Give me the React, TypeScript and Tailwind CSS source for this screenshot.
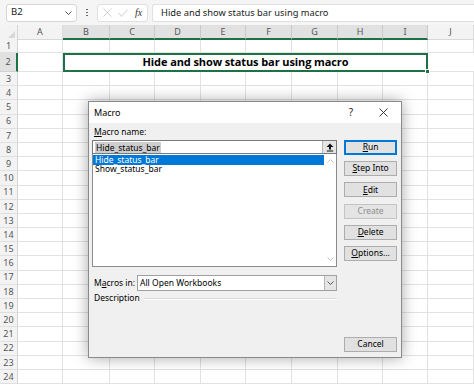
import clsx from "clsx";

const cols = [
  { k: "A", w: 45 },
  { k: "B", w: 47 },
  { k: "C", w: 45 },
  { k: "D", w: 46 },
  { k: "E", w: 45 },
  { k: "F", w: 46 },
  { k: "G", w: 46 },
  { k: "H", w: 45 },
  { k: "I", w: 45 },
  { k: "J", w: 46 },
];

const isSel = (k: string) => k !== "A" && k !== "J";

const rowHeights = [13, 19, ...Array.from({ length: 22 }, () => 14.2)];

const Btn = ({
  children,
  primary,
  disabled,
}: {
  children: React.ReactNode;
  primary?: boolean;
  disabled?: boolean;
}) => (
  <div
    className={clsx(
      "h-[15px] flex items-center justify-center border text-[8.5px] leading-none",
      primary && "border-[#0078d7] bg-[#e1e1e1] shadow-[inset_0_0_0_1px_#0078d7] text-black",
      !primary && !disabled && "border-[#adadad] bg-[#e1e1e1] text-black",
      disabled && "border-[#c4c4c4] bg-[#e4e4e4] text-[#8d8d8d]"
    )}
  >
    {children}
  </div>
);

const MacroDialog = () => (
  <div className="absolute left-[88px] top-[101px] w-[314px] h-[257px] bg-[#f0f0f0] border border-[#8a8a8a] shadow-[0_0_14px_rgba(0,0,0,0.35)] flex flex-col font-['Noto_Sans',sans-serif] text-black">
    <div className="h-[21px] bg-white flex items-center pl-[5px] shrink-0">
      <span className="text-[9px]">Macro</span>
      <span className="ml-auto text-[10px] mr-[26px] text-[#222]">?</span>
      <svg width="9" height="9" viewBox="0 0 9 9" className="mr-[13px]">
        <path d="M0.5 0.5 L8.5 8.5 M8.5 0.5 L0.5 8.5" stroke="#222" strokeWidth="0.9" />
      </svg>
    </div>
    <div className="flex-1 flex pl-[3px] pr-[4px] pb-[5px]">
      <div className="w-[246px] flex flex-col">
        <div className="h-[17px] flex items-center pl-[2px] pt-[1px] text-[8.5px]">
          <span>
            <span className="underline">M</span>acro name:
          </span>
        </div>
        <div className="h-[14px] bg-white border border-[#7a7a7a] flex items-center pl-[2px]">
          <span className="bg-[#cdcdcd] text-[8.5px] leading-[11px] px-[1px]">Hide_status_bar</span>
          <div className="ml-auto w-[14px] h-full bg-[#e5e5e5] border-l border-[#b5b5b5] flex items-center justify-center">
            <svg width="8" height="9" viewBox="0 0 8 9">
              <path d="M4 0.5 L7.5 4 L5 4 L5 6.5 L3 6.5 L3 4 L0.5 4 Z" fill="#111" />
              <path d="M0.8 8 H7.2" stroke="#111" strokeWidth="1" />
            </svg>
          </div>
        </div>
        <div className="h-[113px] bg-white border border-t-0 border-[#8c8c8c] flex">
          <div className="flex-1 flex flex-col text-[8.5px] pt-[1px]">
            <div className="h-[9.5px] bg-[#0078d7] text-white flex items-center pl-[2px] leading-none">
              Hide_status_bar
            </div>
            <div className="h-[10px] flex items-center pl-[2px] leading-none">Show_status_bar</div>
          </div>
          <div className="w-[12px] flex flex-col items-center justify-between py-[5px]">
            <svg width="7" height="4" viewBox="0 0 7 4">
              <path d="M0.5 3.5 L3.5 0.5 L6.5 3.5" stroke="#c2c2c2" fill="none" strokeWidth="1" />
            </svg>
            <svg width="7" height="4" viewBox="0 0 7 4">
              <path d="M0.5 0.5 L3.5 3.5 L6.5 0.5" stroke="#c2c2c2" fill="none" strokeWidth="1" />
            </svg>
          </div>
        </div>
        <div className="mt-[8px] h-[16px] flex items-center">
          <span className="w-[45px] pl-[2px] text-[8.5px]">
            M<span className="underline">a</span>cros in:
          </span>
          <div className="flex-1 h-full bg-white border border-[#a0a0a0] flex items-center pl-[2px]">
            <span className="text-[8.5px]">All Open Workbooks</span>
            <div className="ml-auto w-[12px] h-full bg-[#e5e5e5] border-l border-[#b5b5b5] flex items-center justify-center">
              <svg width="7" height="4" viewBox="0 0 7 4">
                <path d="M0.5 0.5 L3.5 3.5 L6.5 0.5" stroke="#444" fill="none" strokeWidth="0.9" />
              </svg>
            </div>
          </div>
        </div>
        <div className="mt-[1px] h-[13px] flex items-center">
          <span className="pl-[2px] text-[8.5px]">Description</span>
          <div className="flex-1 ml-[4px] h-[2px] border-t border-[#dadada] border-b border-b-white" />
        </div>
      </div>
      <div className="ml-[7px] w-[53px] pt-[17px] flex flex-col gap-[6.2px]">
        <Btn primary>
          <span className="underline">R</span>un
        </Btn>
        <Btn>
          <span className="underline">S</span>tep Into
        </Btn>
        <Btn>
          <span className="underline">E</span>dit
        </Btn>
        <Btn disabled>Create</Btn>
        <Btn>
          <span className="underline">D</span>elete
        </Btn>
        <Btn>
          <span className="underline">O</span>ptions...
        </Btn>
        <div className="mt-auto">
          <Btn>Cancel</Btn>
        </div>
      </div>
    </div>
  </div>
);

export default function App() {
  return (
    <div className="relative w-[474px] h-[385px] overflow-hidden bg-white font-['Noto_Sans',sans-serif]">
      {/* formula bar */}
      <div className="h-[25px] bg-[#f5f5f5] flex items-center px-[6px] gap-[4px]">
        <div className="w-[71px] h-[18px] bg-white border border-[#d6d6d6] rounded-[3px] flex items-center pl-[4px] pr-[4px]">
          <span className="text-[9.5px] text-[#222]">B2</span>
          <svg width="7" height="4" viewBox="0 0 7 4" className="ml-auto">
            <path d="M0.5 0.5 L3.5 3.5 L6.5 0.5" stroke="#555" fill="none" strokeWidth="1" />
          </svg>
        </div>
        <div className="w-[12px] flex flex-col items-center gap-[1.5px]">
          <div className="w-[1.5px] h-[1.5px] bg-[#555] rounded-full" />
          <div className="w-[1.5px] h-[1.5px] bg-[#555] rounded-full" />
          <div className="w-[1.5px] h-[1.5px] bg-[#555] rounded-full" />
        </div>
        <div className="w-[51px] h-[18px] bg-white border border-[#e0e0e0] rounded-[3px] flex items-center pl-[5px] gap-[6px]">
          <svg width="9" height="9" viewBox="0 0 9 9">
            <path d="M0.5 0.5 L8.5 8.5 M8.5 0.5 L0.5 8.5" stroke="#c9c9c9" strokeWidth="0.9" />
          </svg>
          <svg width="10" height="8" viewBox="0 0 10 8">
            <path d="M0.5 4 L3.5 7.5 L9.5 0.5" stroke="#c9c9c9" fill="none" strokeWidth="0.9" />
          </svg>
          <span className="text-[10px] italic font-['Liberation_Serif',serif] text-[#333] ml-[1px]">fx</span>
        </div>
        <div className="flex-1 h-[18px] bg-white border border-[#e0e0e0] rounded-l-[3px] border-r-0 -mr-[6px] flex items-center pl-[8px]">
          <span className="text-[9.3px] text-[#222]">Hide and show status bar using macro</span>
        </div>
      </div>

      {/* column header */}
      <div className="h-[15px] flex bg-[#f3f3f3] text-[9px] text-[#555]">
        <div className="w-[18px] border-r border-[#d4d4d4] relative">
          <div className="absolute right-[2px] bottom-[2px] w-0 h-0 border-l-[7px] border-l-transparent border-b-[7px] border-b-[#d8d8d8]" />
        </div>
        {cols.map((c) => (
          <div
            key={c.k}
            style={{ width: c.w }}
            className={clsx(
              "flex items-center justify-center border-r",
              isSel(c.k)
                ? "bg-[#e1e1e1] border-[#c8c8c8] border-b-2 border-b-[#1e7145]"
                : "border-[#dcdcdc] border-b border-b-[#d8d8d8]"
            )}
          >
            {c.k}
          </div>
        ))}
      </div>

      {/* rows */}
      {rowHeights.map((h, i) => {
        const n = i + 1;
        return (
          <div key={n} style={{ height: h }} className="flex">
            <div
              className={clsx(
                "w-[18px] flex items-center justify-center text-[9px] text-[#555] border-b",
                n === 2
                  ? "bg-[#e1e1e1] border-b-[#d0d0d0] border-r-2 border-r-[#1e7145]"
                  : "bg-[#f3f3f3] border-b-[#e0e0e0] border-r border-r-[#d4d4d4]"
              )}
            >
              {n}
            </div>
            {n === 2 ? (
              <>
                <div style={{ width: 45 }} className="border-r border-b border-[#e2e2e2]" />
                <div className="w-[365px] border-2 border-[#1e7145] flex items-center justify-center relative">
                  <span className="text-[11px] font-bold text-black font-['Open_Sans',sans-serif] tracking-[-0.1px]">
                    Hide and show status bar using macro
                  </span>
                  <div className="absolute -right-[4px] -bottom-[4px] w-[5px] h-[5px] bg-[#1e7145] border border-white" />
                </div>
                <div style={{ width: 46 }} className="border-b border-[#e2e2e2]" />
              </>
            ) : (
              cols.map((c) => (
                <div key={c.k} style={{ width: c.w }} className="border-r border-b border-[#e2e2e2]" />
              ))
            )}
          </div>
        );
      })}

      <MacroDialog />
    </div>
  );
}
